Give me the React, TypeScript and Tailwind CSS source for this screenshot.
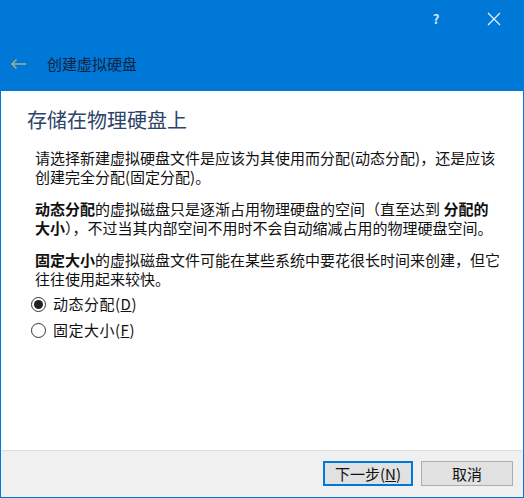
import React from 'react';

const font = { fontFamily: '"Noto Sans CJK SC", "Noto Sans", sans-serif' };

const Radio: React.FC<{ checked?: boolean; label: string; hotkey: string }> = ({ checked, label, hotkey }) => (
  <label className="flex items-center h-[26px] gap-[7px] text-[15px] text-[#111]">
    <span className="w-[15px] h-[15px] rounded-full border border-[#333] bg-white flex items-center justify-center">
      {checked && <span className="w-[9px] h-[9px] rounded-full bg-[#222]" />}
    </span>
    <span className="tracking-[0.5px]">
      {label}(<u>{hotkey}</u>)
    </span>
  </label>
);

export default function App() {
  return (
    <div className="w-[524px] h-[498px] bg-[#0078d7] flex flex-col" style={font}>
      {/* Title bar */}
      <div className="h-[38px] flex justify-end">
        <div className="w-[58px] flex items-center justify-center text-[13px] font-bold text-[#cfe6ff]">?</div>
        <div className="w-[58px] mr-[1px] flex items-center justify-center">
          <svg width="14" height="14" viewBox="0 0 14 14">
            <path d="M1 1 L13 13 M13 1 L1 13" stroke="#e6f2ff" strokeWidth="1.2" />
          </svg>
        </div>
      </div>

      {/* Wizard header */}
      <div className="h-[53px] flex items-center pl-[10px] gap-[20px] pb-[2px]">
        <svg width="17" height="12" viewBox="0 0 17 12">
          <path d="M16 6 H2 M6.5 1.5 L2 6 L6.5 10.5" stroke="#b3a98a" strokeWidth="1.4" fill="none" />
        </svg>
        <span className="text-[15px] text-[#13233f] pt-[2px]">创建虚拟硬盘</span>
      </div>

      {/* Content */}
      <div className="flex-1 bg-white mx-[1px] pl-[26px] pt-[15px]">
        <h1 className="text-[20px] leading-[28px] text-[#2c4468]">存储在物理硬盘上</h1>
        <div className="pl-[8px] pt-[14px] text-[15px] leading-[19px] text-[#111] flex flex-col gap-[13px] whitespace-nowrap">
          <p>
            请选择新建虚拟硬盘文件是应该为其使用而分配(动态分配)，还是应该
            <br />
            创建完全分配(固定分配)。
          </p>
          <p>
            <b>动态分配</b>的虚拟磁盘只是逐渐占用物理硬盘的空间（直至达到 <b>分配的</b>
            <br />
            <b>大小</b>），不过当其内部空间不用时不会自动缩减占用的物理硬盘空间。
          </p>
          <p>
            <b>固定大小</b>的虚拟磁盘文件可能在某些系统中要花很长时间来创建，但它
            <br />
            往往使用起来较快。
          </p>
        </div>
        <div className="pl-[4px] pt-[3px] flex flex-col">
          <Radio checked label="动态分配" hotkey="D" />
          <Radio label="固定大小" hotkey="F" />
        </div>
      </div>

      {/* Footer */}
      <div className="h-[47px] mx-[1px] mb-[1px] bg-[#f0f0f0] border-t border-[#dfdfdf] flex justify-end items-start pt-[10px] pr-[10px] gap-[8px]">
        <button className="w-[90px] h-[25px] bg-[#e1e1e1] border border-[#0078d7] shadow-[inset_0_0_0_1px_#0078d7] text-[15px] text-[#111] leading-none">
          下一步(<u>N</u>)
        </button>
        <button className="w-[92px] h-[25px] bg-[#e1e1e1] border border-[#adadad] text-[15px] text-[#111] leading-none">
          取消
        </button>
      </div>
    </div>
  );
}
